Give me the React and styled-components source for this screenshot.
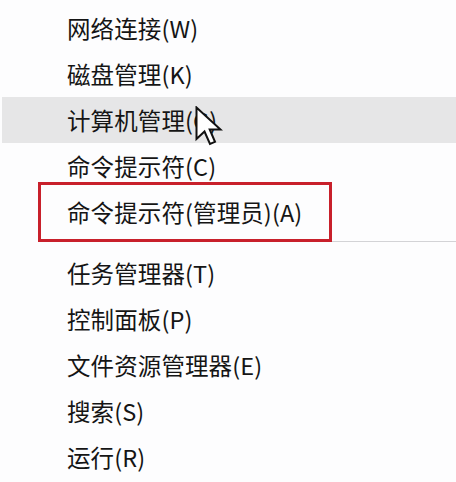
import React from "react";
import styled, { createGlobalStyle } from "styled-components";

const Global = createGlobalStyle`
  html, body { margin: 0; padding: 0; background: #fdfdfe; }
  #root { width: 456px; height: 482px; overflow: hidden; }
`;

const Menu = styled.div`
  width: 456px;
  height: 482px;
  box-sizing: border-box;
  padding-top: 5px;
  background: #fdfdfe;
  display: flex;
  flex-direction: column;
  font-family: "Noto Sans CJK SC", "Noto Sans", sans-serif;
`;

const Row = styled.div`
  position: relative;
  height: 46px;
  flex: none;
  display: flex;
  align-items: center;
  padding-left: 65px;
  margin-left: 2px;
  background: ${(p) => (p.$hover ? "#e6e6e7" : "transparent")};
  font-size: 23.5px;
  color: #151515;
  letter-spacing: 0.1px;
  white-space: nowrap;
`;

const Separator = styled.div`
  flex: none;
  height: 15px;
  display: flex;
  align-items: flex-start;
  padding-top: 6px;
  box-sizing: border-box;
  padding-left: 38px;
  &::after {
    content: "";
    flex: 1;
    height: 1px;
    background: #d3d3d6;
  }
`;

const Highlight = styled.div`
  position: absolute;
  left: 36px;
  top: -7px;
  width: 294px;
  height: 60px;
  box-sizing: border-box;
  border: 3px solid #c8202b;
  pointer-events: none;
  z-index: 2;
`;

const Cursor = styled.svg`
  position: absolute;
  left: 193px;
  top: 9px;
  z-index: 3;
`;

const Arrow = () => (
  <Cursor width="28" height="41" viewBox="0 0 28 41">
    <path
      d="M1.5 1.5 L1.5 33 L9.5 25.5 L15 38 L20 35.8 L14.7 23.5 L25.5 23.5 Z"
      fill="#ffffff"
      stroke="#111"
      strokeWidth="2"
      strokeLinejoin="miter"
    />
  </Cursor>
);

const top = [
  { t: "网络连接(W)" },
  { t: "磁盘管理(K)" },
  { t: "计算机管理(G)", hover: true },
  { t: "命令提示符(C)" },
  { t: "命令提示符(管理员)(A)", boxed: true },
];
const bottom = ["任务管理器(T)", "控制面板(P)", "文件资源管理器(E)", "搜索(S)", "运行(R)"];

export default function App() {
  return (
    <>
      <Global />
      <Menu>
        {top.map((it) => (
          <Row key={it.t} $hover={it.hover}>
            {it.t}
            {it.hover && <Arrow />}
            {it.boxed && <Highlight />}
          </Row>
        ))}
        <Separator />
        {bottom.map((t) => (
          <Row key={t}>{t}</Row>
        ))}
      </Menu>
    </>
  );
}
